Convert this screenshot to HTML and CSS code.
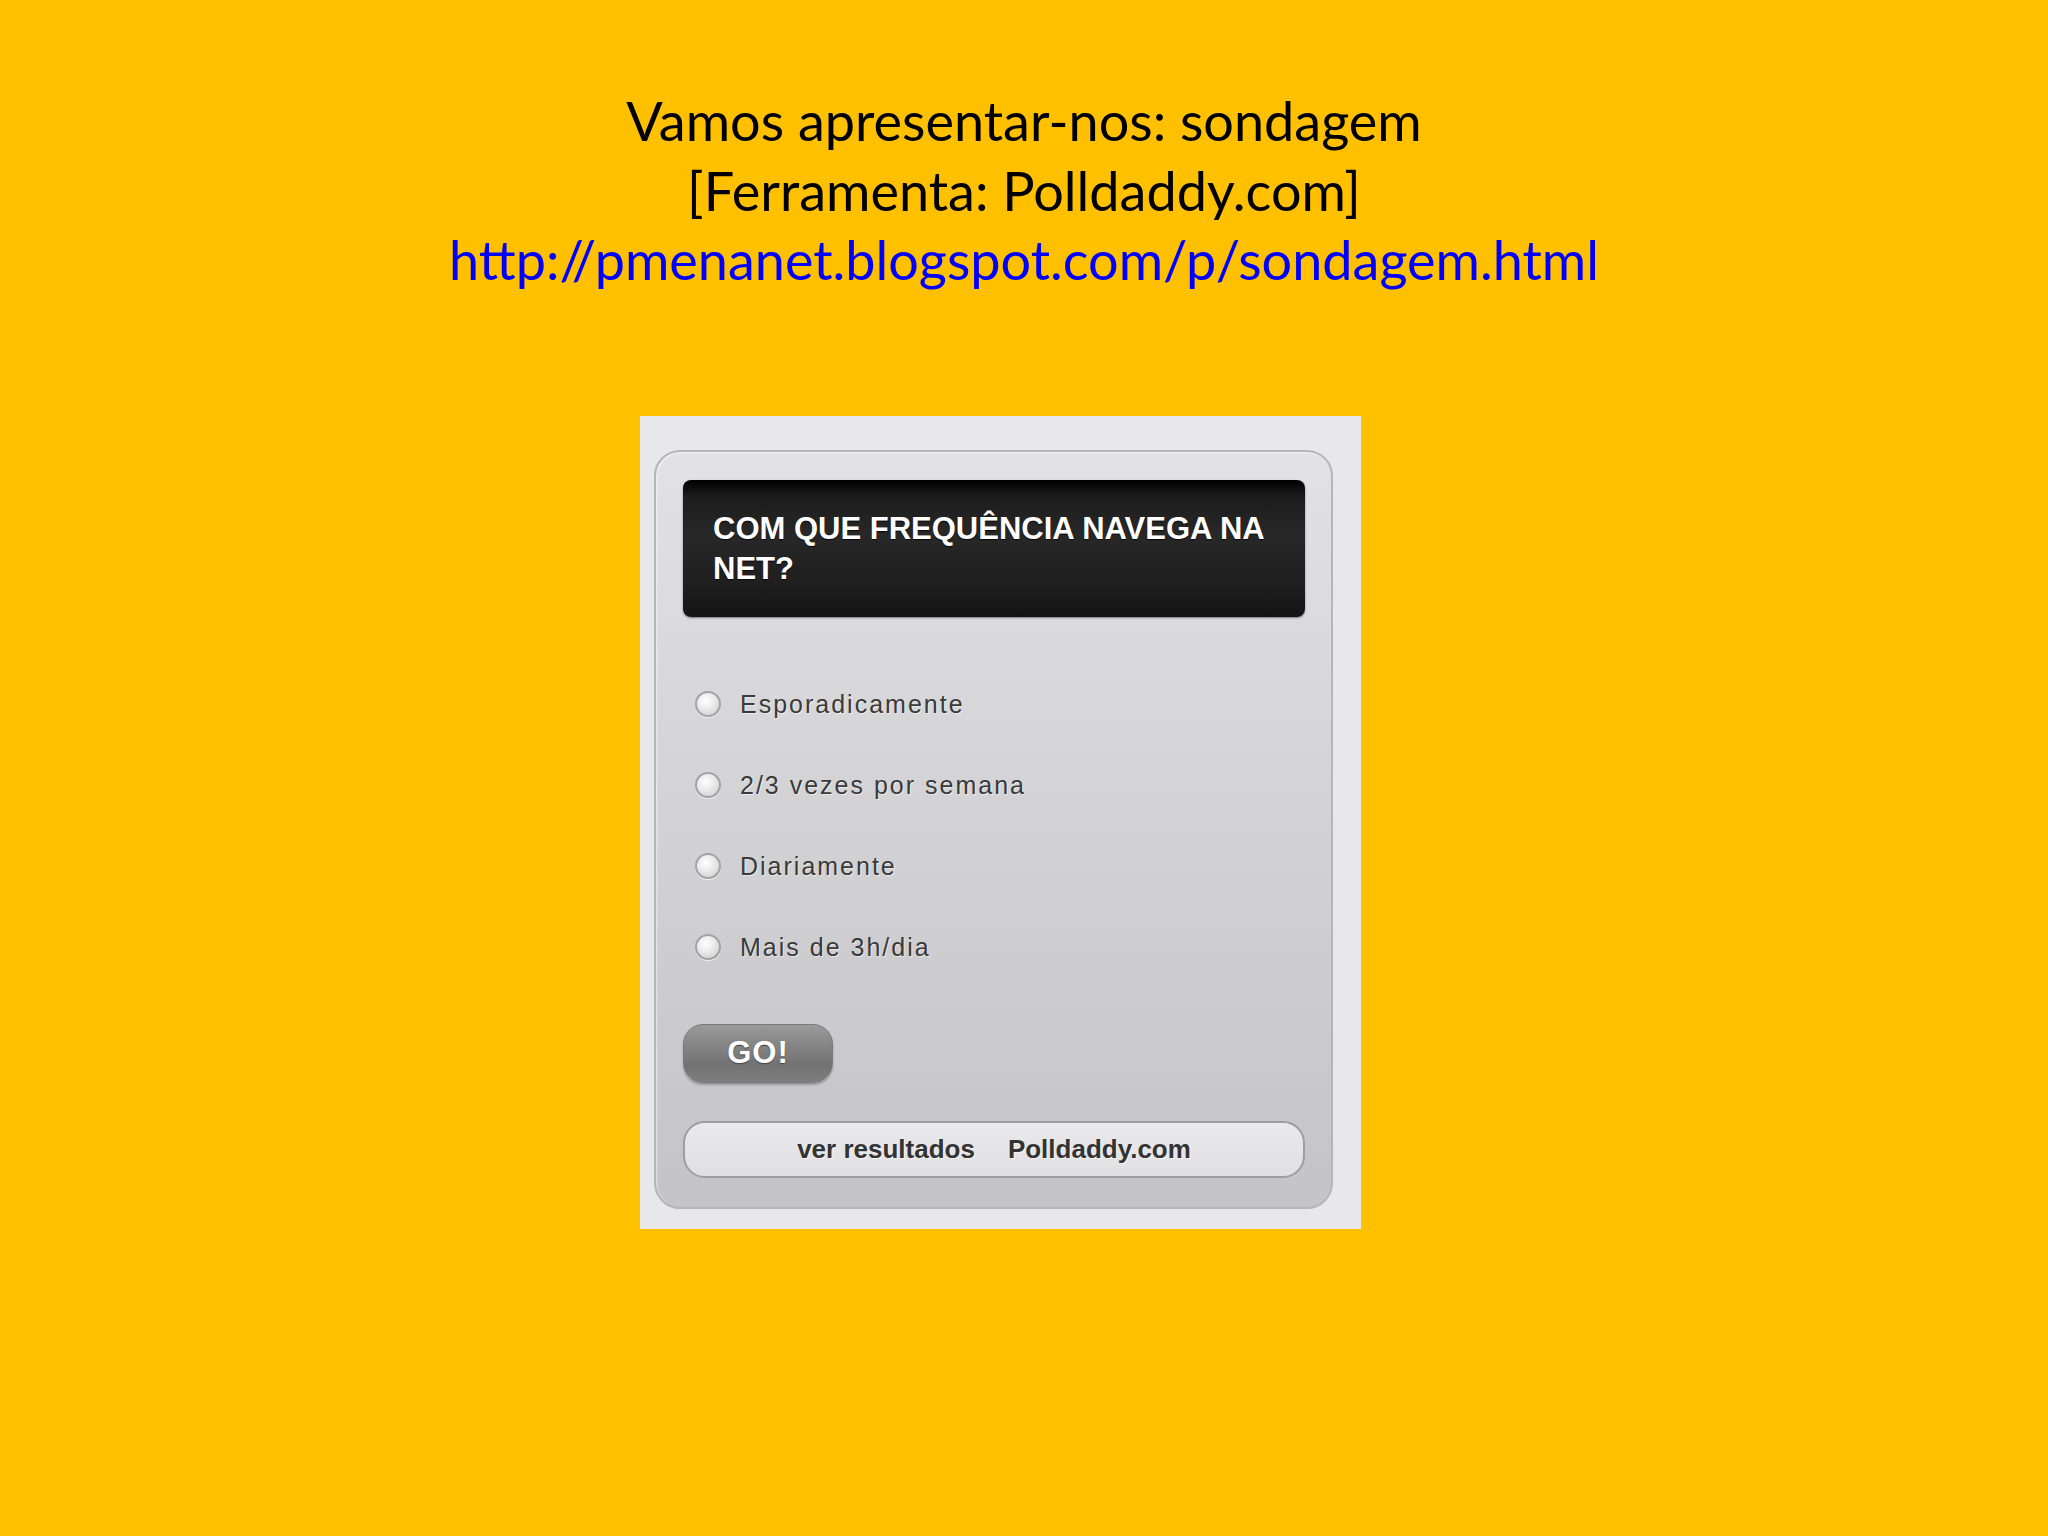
FILE: index.html
```html
<!DOCTYPE html>
<html lang="pt">
<head>
<meta charset="utf-8">
<title>Vamos apresentar-nos: sondagem</title>
<link rel="stylesheet" href="styles.css">
</head>
<body>
<div class="slide">
  <header class="title">
    <div class="line">Vamos apresentar-nos: sondagem</div>
    <div class="line">[Ferramenta: Polldaddy.com]</div>
    <div class="line"><a class="link" href="#">http://pmenanet.blogspot.com/p/sondagem.html</a></div>
  </header>

  <section class="card">
    <div class="poll">
      <div class="question">COM QUE FREQUÊNCIA NAVEGA NA NET?</div>
      <ul class="options">
        <li class="option"><span class="radio"></span><span class="label">Esporadicamente</span></li>
        <li class="option"><span class="radio"></span><span class="label">2/3 vezes por semana</span></li>
        <li class="option"><span class="radio"></span><span class="label">Diariamente</span></li>
        <li class="option"><span class="radio"></span><span class="label">Mais de 3h/dia</span></li>
      </ul>
      <div class="actions"><span class="go">GO!</span></div>
      <div class="footer"><span>ver resultados</span><span>Polldaddy.com</span></div>
    </div>
  </section>
</div>
</body>
</html>
```
FILE: styles.css
```css
html, body {
  margin: 0;
  padding: 0;
}
body {
  background: #ffc000;
  width: 2048px;
  height: 1536px;
  overflow: hidden;
}
.slide {
  display: flex;
  flex-direction: column;
}
.title {
  padding-top: 86px;
  text-align: center;
  font-family: Lato, "Open Sans", sans-serif;
  font-size: 54px;
  line-height: 69.5px;
  color: #000;
}
.link {
  color: #0000ff;
  text-decoration: none;
}
.card {
  margin-top: 121px;
  margin-left: 640px;
  width: 721px;
  height: 813px;
  box-sizing: border-box;
  background: #e8e7ea;
  padding: 34px 28px 20px 14px;
}
.poll {
  box-sizing: border-box;
  height: 759px;
  border: 2px solid #b6b5b9;
  border-radius: 26px;
  background: linear-gradient(#e2e1e4 0%, #d5d4d7 40%, #c4c3c6 100%);
  padding: 28px 26px 28px 27px;
  display: flex;
  flex-direction: column;
  font-family: "Liberation Sans", Arial, sans-serif;
  box-shadow: inset 1px 1px 2px rgba(255,255,255,.6);
}
.question {
  height: 137px;
  box-sizing: border-box;
  padding: 29px 24px 0 30px;
  border-radius: 8px;
  background: linear-gradient(#000 0%, #1c1c1c 12%, #282828 40%, #1f1f1f 75%, #141414 100%);
  box-shadow: 0 1px 2px rgba(0,0,0,.45);
  color: #fff;
  font-weight: bold;
  font-size: 31px;
  line-height: 40px;
  text-shadow: 0 1px 1px rgba(0,0,0,.8);
}
.options {
  list-style: none;
  margin: 47px 0 0 0;
  padding: 0;
}
.option {
  height: 81px;
  display: flex;
  align-items: center;
  padding-left: 12px;
}
.radio {
  width: 26px;
  height: 26px;
  box-sizing: border-box;
  border-radius: 50%;
  border: 2px solid #a3a3a3;
  background: radial-gradient(circle at 40% 35%, #ffffff 0%, #ececec 40%, #c9c9c9 100%);
  box-shadow: 0 1px 0 rgba(255,255,255,.7);
  flex: none;
}
.label {
  margin-left: 19px;
  font-size: 25px;
  letter-spacing: 2px;
  color: #3a3a3a;
  text-shadow: 1px 1px 0 rgba(255,255,255,.55);
}
.actions {
  margin-top: 36px;
  display: flex;
}
.go {
  width: 150px;
  height: 59px;
  box-sizing: border-box;
  border-radius: 20px;
  border: 1px solid #7a7a7a;
  background: linear-gradient(#9a9a9a 0%, #858585 35%, #727272 70%, #7e7e7e 100%);
  box-shadow: 0 2px 2px rgba(0,0,0,.25);
  display: flex;
  align-items: center;
  justify-content: center;
  color: #fff;
  font-weight: bold;
  font-size: 31px;
  letter-spacing: 1px;
  text-shadow: 0 1px 1px #444;
}
.footer {
  margin-top: 38px;
  height: 57px;
  box-sizing: border-box;
  border: 2px solid #9e9ea1;
  border-radius: 22px;
  background: linear-gradient(#eaeaec, #e0dfe2);
  display: flex;
  align-items: center;
  justify-content: center;
  gap: 33px;
  color: #333;
  font-weight: bold;
  font-size: 26px;
  text-shadow: 1px 1px 0 rgba(255,255,255,.6);
}
```
